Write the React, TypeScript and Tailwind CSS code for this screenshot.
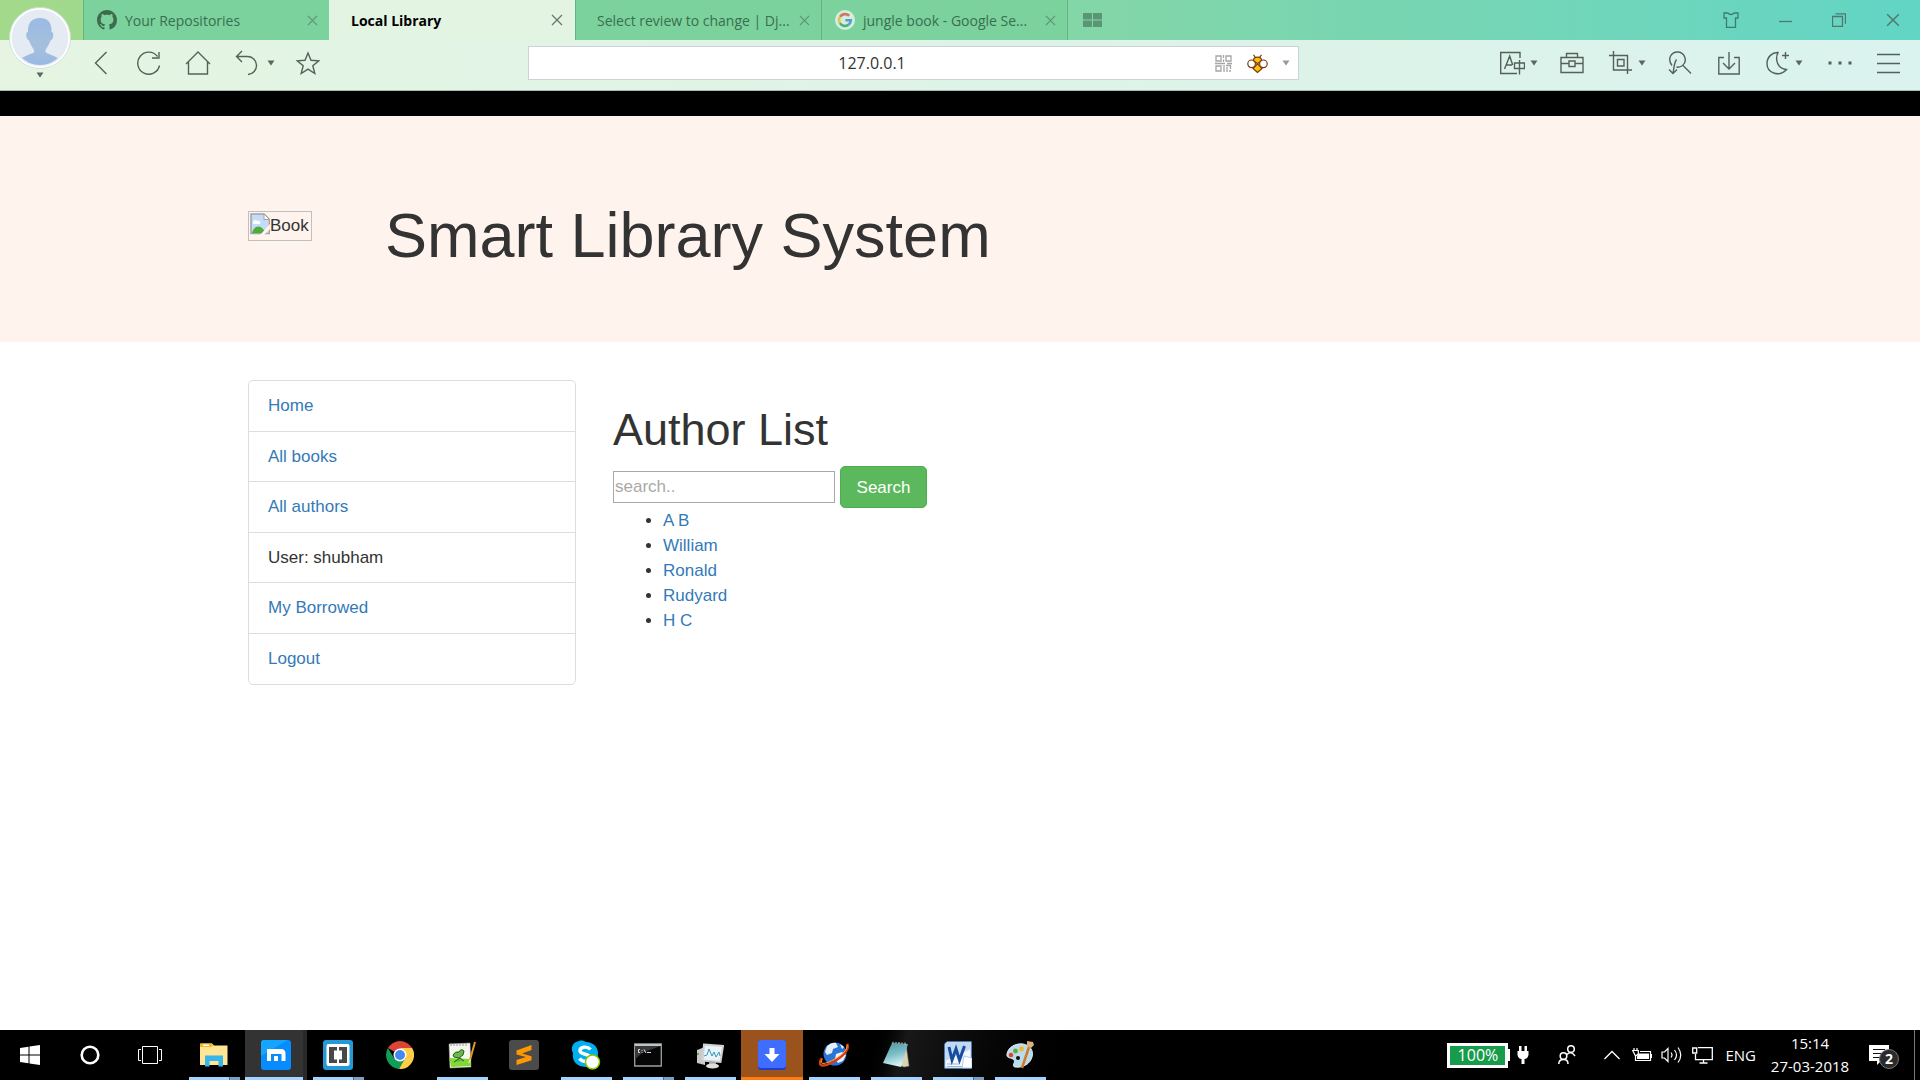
import type { ReactNode } from "react";

type IconProps = { w: number; h: number; children: ReactNode; className?: string; vb?: string };

function Icon({ w, h, children, className = "", vb }: IconProps) {
  return (
    <svg width={w} height={h} viewBox={vb ?? `0 0 ${w} ${h}`} fill="none" stroke="currentColor" className={`shrink-0 ${className}`} aria-hidden="true">
      {children}
    </svg>
  );
}

function Caret({ className = "text-[#5c6560]" }: { className?: string }) {
  return (
    <Icon w={8} h={6} className={className}>
      <path d="M0.5 0.5h7L4 5.5z" fill="currentColor" stroke="none" />
    </Icon>
  );
}

function Cross({ size }: { size: number }) {
  return (
    <Icon w={size} h={size} vb="0 0 12 12">
      <path d="M1 1l10 10M11 1L1 11" strokeWidth="1.3" />
    </Icon>
  );
}

/* ---------- browser tabs ---------- */

const GithubMark = (
  <Icon w={20} h={20} vb="0 0 16 16" className="text-[#3d6b4e]">
    <path
      stroke="none"
      fill="currentColor"
      d="M8 0C3.58 0 0 3.58 0 8c0 3.54 2.29 6.53 5.47 7.59.4.07.55-.17.55-.38 0-.19-.01-.82-.01-1.49-2.01.37-2.53-.49-2.69-.94-.09-.23-.48-.94-.82-1.13-.28-.15-.68-.52-.01-.53.63-.01 1.08.58 1.23.82.72 1.21 1.87.87 2.33.66.07-.52.28-.87.51-1.07-1.78-.2-3.64-.89-3.64-3.95 0-.87.31-1.59.82-2.15-.08-.2-.36-1.02.08-2.12 0 0 .67-.21 2.2.82.64-.18 1.32-.27 2-.27s1.36.09 2 .27c1.53-1.04 2.2-.82 2.2-.82.44 1.1.16 1.92.08 2.12.51.56.82 1.27.82 2.15 0 3.07-1.87 3.75-3.65 3.95.29.25.54.73.54 1.48 0 1.07-.01 1.93-.01 2.2 0 .21.15.46.55.38A8.01 8.01 0 0 0 16 8c0-4.42-3.58-8-8-8z"
    />
  </Icon>
);

const GoogleMark = (
  <Icon w={20} h={20}>
    <circle cx="10" cy="10" r="10" fill="#d3eedd" stroke="none" />
    <g strokeWidth="2.6">
      <path d="M14.2 5.8A6 6 0 0 0 5 6.8" stroke="#cf7765" />
      <path d="M5 6.8A6 6 0 0 0 4.9 13.1" stroke="#e3c25a" />
      <path d="M4.9 13.1A6 6 0 0 0 13.8 14.6" stroke="#4db273" />
      <path d="M13.8 14.6A6 6 0 0 0 15.8 10.2H10.4" stroke="#5a9bd0" />
    </g>
  </Icon>
);

const tabs = [
  { title: "Your Repositories", icon: GithubMark, active: false },
  { title: "Local Library", icon: null, active: true },
  { title: "Select review to change | Dj...", icon: null, active: false },
  { title: "jungle book - Google Se...", icon: GoogleMark, active: false },
];

function TabStrip() {
  return (
    <div className="flex h-10 bg-linear-to-r from-[#a3d98a] via-[#84d6a6] via-55% to-[#62d5c5] pl-[83px] text-[#3f7355]">
      {tabs.map((t) => (
        <div
          key={t.title}
          className={
            t.active
              ? "flex w-[246px] items-center bg-[#e4f4e2] pr-3 pl-[22px] text-[#6b7570]"
              : "flex w-[246px] items-center border-l border-[#62b583] bg-[#7bd29c] pr-[11px] pl-[13px] text-[#5c9575]"
          }
        >
          {t.icon && <span className="mr-2">{t.icon}</span>}
          <button
            className={
              t.active
                ? "flex-1 pt-px text-left text-sm font-bold whitespace-nowrap text-black"
                : `flex-1 pt-px text-left text-sm whitespace-nowrap text-[#3a6e50] ${t.icon ? "" : "pl-2"}`
            }
          >
            {t.title}
          </button>
          <button aria-label={`Close ${t.title}`}>
            <Cross size={t.active ? 12 : 11} />
          </button>
        </div>
      ))}
      <button aria-label="New tab" className="border-l border-[#62b583] px-[15px]">
        <Icon w={19} h={14} className="text-[#5a9574]">
          <path d="M0 0h9v6.500H0zM10 0h9v6.500h-9zM0 7.500h9V14H0zM10 7.500h9V14h-9z" fill="currentColor" stroke="none" />
        </Icon>
      </button>
      <div className="ml-auto flex text-[#52776f]">
        <button aria-label="Skins" className="flex w-[54px] items-center justify-center text-[#3a7d70]">
          <Icon w={16} h={16}>
            <path d="M5 1H1v5h2.500v9.500h9V6H15V1h-4c-1 2-5 2-6 0z" strokeWidth="1.300" />
          </Icon>
        </button>
        <button aria-label="Minimize" className="flex w-[54px] items-center justify-center">
          <Icon w={13} h={13}><path d="M0 7.500h13" strokeWidth="1.300" /></Icon>
        </button>
        <button aria-label="Restore" className="flex w-[54px] items-center justify-center">
          <Icon w={14} h={14}><path d="M.5 3.500h10v10H.5zM3.500 .8h10v10" strokeWidth="1.300" /></Icon>
        </button>
        <button aria-label="Close window" className="flex w-[54px] items-center justify-center">
          <Cross size={14} />
        </button>
      </div>
    </div>
  );
}

/* ---------- browser toolbar ---------- */

function Toolbar() {
  return (
    <div className="flex h-[51px] items-center border-b border-[#a3bdb4] bg-linear-to-r from-[#e5f5e2] via-[#def3e7] to-[#daf3ee] pb-1 pl-[77px] text-[#566059]">
      <button aria-label="Back" className="flex w-12 justify-center">
        <Icon w={14} h={24}><path d="M12.500 1L1.500 12l11 11" strokeWidth="1.400" /></Icon>
      </button>
      <button aria-label="Reload" className="flex w-12 justify-center">
        <Icon w={24} h={24}>
          <path d="M22.500 14.500A11 11 0 1 1 20.500 5.500M22 1v6h-7" strokeWidth="1.400" />
        </Icon>
      </button>
      <button aria-label="Home" className="flex w-[50px] justify-center">
        <Icon w={26} h={24}>
          <path d="M1 13L13 1l12 12M3.500 11v12h19V11" strokeWidth="1.400" />
        </Icon>
      </button>
      <button aria-label="Undo closed tab" className="flex w-[60px] items-center justify-center gap-2 pr-1 pl-2">
        <Icon w={24} h={26}>
          <path d="M7 1L1.500 6.500 7 12M1.500 6.500H12a9 9 0 0 1 1 18" strokeWidth="1.400" />
        </Icon>
        <Caret />
      </button>
      <button aria-label="Bookmark" className="flex w-[50px] justify-center">
        <Icon w={24} h={25}>
          <path d="M12 2l3 7.300 7.800.5-6 5 2 7.700L12 18.200 5.200 22.500l2-7.700-6-5L9 9.300z" strokeWidth="1.400" />
        </Icon>
      </button>

      <div className="mr-[189px] ml-[195px] flex h-[34px] flex-1 items-center border border-[#cdd1d8] bg-white pr-2">
        <input
          aria-label="Address"
          defaultValue="127.0.0.1"
          className="h-full min-w-0 flex-1 text-center text-base text-[#333] outline-none"
        />
        <button aria-label="QR code" className="text-[#a5a5a5]">
          <Icon w={17} h={17}>
            <path d="M1 1h5v5H1zM11 1h5v5h-5zM1 11h5v5H1zM8.500 0v3M8.500 4.500V7M0 8.500h10M12 8.500h5M9 10v7M11 10.500h5M12 12v5M15.500 11v3M14 16h2" strokeWidth="1.300" />
          </Icon>
        </button>
        <button aria-label="Site assistant" className="ml-[15px]">
          <Icon w={21} h={19}>
            <g stroke="#7a3a12" strokeWidth="1.200">
              <circle cx="4.600" cy="9.800" r="3.800" fill="#fff" />
              <circle cx="16.400" cy="9.800" r="3.800" fill="#fff" />
              <path d="M6.500 6.500C6.500 2 14.500 2 14.500 6.500L10.500 9.800z" fill="#ffc400" />
              <path d="M10.500 9.800l4.500 4.700-4.500 4-4.500-4z" fill="#ffc400" />
              <path d="M8.500 3.500L6.500 .8M12.500 3.500l2-2.700" />
            </g>
          </Icon>
        </button>
        <button aria-label="Address options" className="ml-[14px]">
          <Caret className="text-[#999]" />
        </button>
      </div>

      <div className="flex items-center">
        <button aria-label="Translate" className="flex w-[60px] items-center gap-[5px]">
          <Icon w={25} h={24} className="ml-3">
            <path d="M20 7V1.500H.7V22.500H17M4.500 18L9.700 5l3 9M6.500 14h5.500M14.500 12h10v5.500h-10zM19.500 9v14.500" strokeWidth="1.400" />
          </Icon>
          <Caret />
        </button>
        <button aria-label="Toolbox" className="flex w-12 justify-center">
          <Icon w={24} h={22}>
            <path d="M1 5.500h22v15H1zM6.500 5V1.500h11V5M1 11.500h8M15 11.500h8M9 9h6v5.500H9z" strokeWidth="1.400" />
          </Icon>
        </button>
        <button aria-label="Snap" className="flex w-[59px] items-center gap-[5px] pl-[13px]">
          <Icon w={24} h={24}>
            <path d="M4.500 0v19H23M0 4.500h18.500V23M8.500 8.500h6.500v6.500H8.500z" strokeWidth="1.400" />
          </Icon>
          <Caret />
        </button>
        <button aria-label="Resource sniffer" className="flex w-[49px] justify-center">
          <Icon w={24} h={24}>
            <path d="M4 14.500C-1 8 3 1 9.500 1c7 0 10.500 9 5 13.500-2 1.500-4 2-6 1.500M15 14.500l8 8M8.500 8.500C6 12 6 17 5 22.500M1 18.500l4 4 4-4" strokeWidth="1.400" />
          </Icon>
        </button>
        <button aria-label="Downloads" className="flex w-[49px] justify-center">
          <Icon w={22} h={24}>
            <path d="M6 6.500H.8V23h20.400V6.500H16M11 1v16.500M5 12l6 6 6-6" strokeWidth="1.400" />
          </Icon>
        </button>
        <button aria-label="Night mode" className="flex w-[60px] items-center gap-[5px] pl-[13px]">
          <Icon w={24} h={24}>
            <path d="M12 1.500C8.500 9 12 18 20.500 18.500 14 26 1 23 1 12.500 1 6 6.500 1 12 1.500zM19.500 1v7M16 4.500h7" strokeWidth="1.400" />
          </Icon>
          <Caret />
        </button>
        <button aria-label="More" className="flex w-[54px] justify-center">
          <Icon w={24} h={4}><path d="M0.500 .5h3v3h-3zM10.500 .5h3v3h-3zM20.500 .5h3v3h-3z" fill="currentColor" stroke="none" /></Icon>
        </button>
        <button aria-label="Menu" className="flex w-[53px] justify-center pr-[10px]">
          <Icon w={23} h={21}><path d="M0 1.500h23M0 10.500h23M0 19.500h23" strokeWidth="1.400" /></Icon>
        </button>
      </div>
    </div>
  );
}

function ProfileButton() {
  return (
    <button aria-label="Profile" className="absolute top-[7px] left-[9px] flex flex-col items-center gap-[3px]">
      <Icon w={62} h={62}>
        <defs>
          <linearGradient id="face" x1="0" y1="0" x2="0" y2="1">
            <stop offset="0" stopColor="#9bbbe4" />
            <stop offset="0.600" stopColor="#a5bfdc" />
            <stop offset="1" stopColor="#98b8e4" />
          </linearGradient>
          <clipPath id="disc"><circle cx="31" cy="31" r="27" /></clipPath>
        </defs>
        <circle cx="31" cy="31" r="29.500" fill="#e4ebf2" stroke="#fff" strokeWidth="2.500" />
        <circle cx="31" cy="31" r="30.500" stroke="#c2d3cf" strokeWidth="0.700" />
        <g clipPath="url(#disc)" stroke="none" fill="url(#face)">
          <path d="M31 11c9 0 12 6 11.500 14 3 0 2 8-1 8.500C40 38 37 42 36.500 43v2.500c4 2 13 4 15 9V60H10v-5.500c2-5 11-7 15-9V43c-.5-1-3.500-5-5-9.500-3-.5-4-8.500-1-8.500C18.500 17 22 11 31 11z" />
        </g>
      </Icon>
      <Caret />
    </button>
  );
}

/* ---------- page ---------- */

function Banner() {
  return (
    <header className="h-[226px] bg-[#fff3ed] px-6 pt-[77px]">
      <div className="mx-auto flex max-w-[1424px] items-start">
        <div role="img" aria-label="Book" className="mt-[18px] flex h-[30px] w-16 items-start border border-[#c0c0c0] pt-px pl-px">
          <Icon w={20} h={22}>
            <path d="M1 1h13l5.500 5.500V20.500H1z" fill="#c6dbf7" stroke="#a0a4a8" strokeWidth="1.500" />
            <path d="M3 10c0-3 3-4 4-2 3-1 4 1 3 3H3z" fill="#fff" stroke="none" />
            <path d="M2 20c2-8 9-9 13-1v1z" fill="#4caf35" stroke="none" />
            <path d="M20 11L10 22h4l6-6z" fill="#fff3ed" stroke="none" />
            <path d="M14 1v5.500h5.500z" fill="#fff" stroke="#a0a4a8" />
          </Icon>
          <span className="text-[17px] leading-[25px]">Book</span>
        </div>
        <h1 className="ml-[73px] text-[63px] leading-[85px]">Smart Library System</h1>
      </div>
    </header>
  );
}

const links = [
  { text: "Home", link: true },
  { text: "All books", link: true },
  { text: "All authors", link: true },
  { text: "User: shubham", link: false },
  { text: "My Borrowed", link: true },
  { text: "Logout", link: true },
];

const authors = ["A B", "William", "Ronald", "Rudyard", "H C"];

function Content() {
  return (
    <main className="flex-1 px-6 pt-[38px] text-[17px] leading-[25px]">
      <div className="mx-auto flex max-w-[1424px] items-start gap-[37px]">
        <ul className="grid min-h-[305px] w-[328px] auto-rows-fr divide-y divide-[#ddd] rounded-[5px] border border-[#ddd]">
          {links.map((l) => (
            <li key={l.text} className="flex items-center px-[19px]">
              {l.link ? <a href="#" className="text-[#337ab7]">{l.text}</a> : l.text}
            </li>
          ))}
        </ul>
        <section className="flex-1 pt-[25px]">
          <h2 className="text-[45px] leading-[50px]">Author List</h2>
          <form className="mt-[11px] flex items-center gap-[5px]" onSubmit={(e) => e.preventDefault()}>
            <input
              aria-label="Search authors"
              placeholder="search.."
              className="h-8 w-[222px] border border-[#a9a9a9] bg-white px-px pb-px placeholder:text-[#a9a9a9]"
            />
            <button className="h-[42px] w-[87px] rounded-[5px] border border-[#4cae4c] bg-[#5cb85c] text-white">Search</button>
          </form>
          <ul className="list-disc pl-[50px]">
            {authors.map((a) => (
              <li key={a}><a href="#" className="text-[#337ab7]">{a}</a></li>
            ))}
          </ul>
        </section>
      </div>
    </main>
  );
}

/* ---------- taskbar ---------- */

type App = { name: string; icon: ReactNode; state: "closed" | "open" | "stacked" | "active" | "alert" };

const apps: App[] = [
  {
    name: "File Explorer", state: "stacked",
    icon: (
      <Icon w={28} h={24}>
        <g stroke="none">
          <path d="M0 1.500Q0 .5 1 .5h11l2 2h13.500V22H0z" fill="#ffe594" />
          <path d="M0 1.500Q0 .5 1 .5h11l1 2-2 1.500H0z" fill="#f5b91f" />
          <path d="M3 1.500h6v1.500H3z" fill="#fff" />
          <path d="M5 23.500V12.500h18v11h-4.500V18h-9v5.500z" fill="#38b6e9" />
        </g>
      </Icon>
    ),
  },
  {
    name: "Maxthon", state: "active",
    icon: (
      <Icon w={30} h={30}>
        <rect width="30" height="30" rx="3" fill="#078cff" stroke="none" />
        <path d="M0 3a3 3 0 0 1 3-3h24L0 16z" fill="#13a5ff" stroke="none" />
        <path d="M6 9h14q4.500 0 4.500 4.500V21h-4v-7H10v7H6z" fill="#fff" stroke="none" />
        <path d="M13 16h4v5h-4z" fill="#fff" stroke="none" />
      </Icon>
    ),
  },
  {
    name: "Brackets", state: "stacked",
    icon: (
      <Icon w={30} h={30}>
        <g stroke="none">
          <rect width="30" height="30" rx="3" fill="#2399d6" />
          <rect x="3.500" y="4" width="23" height="22" rx="2" fill="#fff" />
          <path d="M6 7h8v3.500h-3v9h3V23H6zM24 7h-8v3.500h3v9h-3V23h8z" fill="#484848" />
        </g>
      </Icon>
    ),
  },
  {
    name: "Chrome", state: "closed",
    icon: (
      <Icon w={28} h={28}>
        <g stroke="none">
          <path d="M14 14L1.900 7A14 14 0 0 1 26.100 7H14z" fill="#db4437" />
          <path d="M1.900 7A14 14 0 0 0 13 28l7-10-12-1z" fill="#109d58" />
          <path d="M26.100 7A14 14 0 0 1 13 28l6.500-11L14 7z" fill="#ffcd46" />
          <circle cx="14" cy="14" r="6.500" fill="#fff" />
          <circle cx="14" cy="14" r="5" fill="#4688f1" />
        </g>
      </Icon>
    ),
  },
  {
    name: "Notepad++", state: "open",
    icon: (
      <Icon w={28} h={28}>
        <path d="M1 3l21-1 1 24-21 1z" fill="#f4f7ee" stroke="#aaa" strokeWidth="0.500" />
        <path d="M1.500 17l21 1 .5 7-20 1z" fill="#80d935" stroke="none" />
        <path d="M3 2v3M6 2v3M9 2v3M12 2v3M15 2v3M18 2v3" stroke="#999" />
        <path d="M5 14q2-4 6-3 2-4 5-1l-1 4-4 3-5-1zM6 21l6-4 4 3" fill="#6cb84a" stroke="#285b20" />
        <path d="M27 1l-5 18" stroke="#e39728" strokeWidth="2" />
        <path d="M22.300 18l-1.300 4" stroke="#f4ddb0" strokeWidth="1.500" />
      </Icon>
    ),
  },
  {
    name: "Sublime Text", state: "closed",
    icon: (
      <Icon w={30} h={30}>
        <rect width="30" height="30" rx="3" fill="#4b4b4b" stroke="none" />
        <path d="M7.500 10.500L22.500 5v5l-9.500 3.500 9.500 2.800v4L7.500 25v-5l9.500-3-9.500-2.500z" fill="#ff9800" stroke="none" />
      </Icon>
    ),
  },
  {
    name: "Skype", state: "open",
    icon: (
      <Icon w={30} h={30}>
        <path d="M8 1c3-1 5 0 7 1 7 0 12 5 12 11 0 8-4 14-12 14C3 27 1 18 2 13-1 8 2 2 8 1z" fill="#00aff0" stroke="none" />
        <path d="M19.500 9.500C16 5.500 8.500 7 9 11c.5 4 10.500 2.500 10.500 7 0 4.500-8 4.500-11 .5" stroke="#fff" strokeWidth="3.400" />
        <circle cx="21.500" cy="22" r="7" fill="#fff" stroke="#8cc400" strokeWidth="1.500" />
      </Icon>
    ),
  },
  {
    name: "Command Prompt", state: "stacked",
    icon: (
      <Icon w={28} h={24}>
        <path d="M.7 1h26.600v22H.7z" fill="#060606" stroke="#9aa1a5" strokeWidth="1.300" />
        <path d="M1 1h26v2H1z" fill="#bcc2c6" stroke="none" />
        <path d="M1.500 3h25L8 10l-6.500 6z" fill="#383838" stroke="none" />
        <path d="M6 6.500H4.500v3H6M8 7v.8M8 9v.8M10 6.500l2 3.500M13 9.500h4" stroke="#ddd" />
      </Icon>
    ),
  },
  {
    name: "Resource Monitor", state: "open",
    icon: (
      <Icon w={28} h={28}>
        <path d="M1 9l8-3v18L1 22z" fill="#c9c9c9" stroke="none" />
        <path d="M1 12h2v2H1z" fill="#53b636" stroke="none" />
        <path d="M8 3.500l19 1.500-2.500 16-18-1.500z" fill="#e9f4f8" stroke="#d0d0d0" strokeWidth="2" />
        <path d="M8 15l3-1 2-6 3 7 2-4 2 5 3-5 1 4" stroke="#3b94bd" />
        <path d="M13 20l7 1v4l-7-1z" fill="#a5a5a5" stroke="none" />
        <ellipse cx="16.500" cy="25" rx="6.500" ry="2.600" fill="#dedede" stroke="none" />
      </Icon>
    ),
  },
  {
    name: "Downloader", state: "alert",
    icon: (
      <Icon w={30} h={30}>
        <rect x="1" width="28" height="30" rx="3" fill="#1f3fd0" stroke="none" />
        <rect x="1" width="28" height="28" rx="3" fill="#3f6dff" stroke="none" />
        <path d="M12.500 8h5v6h5L15 22 7.500 14h5z" fill="#fff" stroke="none" />
      </Icon>
    ),
  },
  {
    name: "Planet Browser", state: "open",
    icon: (
      <Icon w={30} h={28}>
        <circle cx="16" cy="13" r="11.500" fill="#2974d6" stroke="none" />
        <path d="M8 5q5-4 9-3l2 4-5 2-1 4-5 2-2-3zM17 13l6-2 4 3-3 6-5 2-3-4zM21 3l4 3-2 2z" fill="#e5f1fa" stroke="none" />
        <path d="M3 17C-3 26 5 26 12 22 24 16 31 8 28 3" stroke="#dd3b18" strokeWidth="2.500" />
        <path d="M3 18.500c-3 6 4 4 10 1C24 14 29 8 28 4" stroke="#ffb52e" />
      </Icon>
    ),
  },
  {
    name: "Notepad", state: "open",
    icon: (
      <Icon w={28} h={28}>
        <defs>
          <linearGradient id="pad" x1="0" y1="0" x2="0.300" y2="1">
            <stop offset="0" stopColor="#4d929c" />
            <stop offset="0.550" stopColor="#7dbfc8" />
            <stop offset="1" stopColor="#d5f1f3" />
          </linearGradient>
        </defs>
        <path d="M24 4l3 21-5 1-5-2z" fill="#d9d2b4" stroke="#998e68" strokeWidth="0.500" />
        <path d="M10 2l16 1-7 23L1 22z" fill="url(#pad)" stroke="none" />
        <path d="M11 2.500V.8M14 2.500V1M17 3V1M20 3V1.500M23 3.500v-2" stroke="#ddd" />
      </Icon>
    ),
  },
  {
    name: "Word", state: "stacked",
    icon: (
      <Icon w={28} h={28}>
        <path d="M3 .7h24.300v26.600H.7V3z" fill="#f3f7fc" stroke="#5282c4" strokeWidth="1" />
        <path d="M1 3l2-2h24v7L1 20z" fill="#c3d9f2" stroke="none" />
        <path d="M3 23h12M3 25.500h15" stroke="#9db9dc" />
        <path d="M5 6l3 13 4-11 3.500 11L20.500 5" stroke="#174ea0" strokeWidth="3" />
        <path d="M20 15l8 2v10h-10z" fill="#fff" stroke="#9bb8de" strokeWidth="0.700" />
      </Icon>
    ),
  },
  {
    name: "Paint", state: "open",
    icon: (
      <Icon w={30} h={30}>
        <path d="M2 14C3 7 11 3 18 4c7 1 11 7 9 13-2 7-9 11-17 10-4-1 1-5-1-7-2-3-8-1-7-6z" fill="#b9dbea" stroke="#e0edf3" />
        <circle cx="6" cy="15" r="2.300" fill="#dd4233" stroke="none" />
        <circle cx="10.500" cy="11" r="2.400" fill="#62a83d" stroke="none" />
        <circle cx="16.500" cy="9" r="2.400" fill="#f1b828" stroke="none" />
        <circle cx="13" cy="18" r="2" fill="#111" stroke="none" />
        <path d="M24 7l-7 21" stroke="#ce7a2b" strokeWidth="2.500" />
        <path d="M22 1l6 1 1 3-3 3-4-2z" fill="#d9b27e" stroke="none" />
      </Icon>
    ),
  },
];

const cellStyle = {
  closed: "",
  open: "",
  stacked: "",
  active: "bg-[#333] border-r-4 border-[#292929]",
  alert: "bg-[#9b531d]",
};

function TaskButton({ app }: { app: App }) {
  return (
    <button aria-label={app.name} className={`flex w-[62px] flex-col items-center ${cellStyle[app.state]}`}>
      <span className={app.state === "active" ? "flex flex-1 items-center pt-[3px] pl-1" : "flex flex-1 items-center pt-[3px]"}>{app.icon}</span>
      {app.state === "closed" && <span className="h-[3px]" />}
      {app.state === "open" && <span className="h-[3px] w-[51px] bg-[#a6d2ff]" />}
      {app.state === "stacked" && (
        <span className="flex h-[3px] w-[51px] bg-[#a6d2ff]">
          <span className="ml-auto w-[11px] border-l border-[#4d6a85] bg-[#7d9fc2]" />
        </span>
      )}
      {app.state === "active" && <span className="h-[3px] w-full bg-[#a6d2ff]" />}
      {app.state === "alert" && <span className="h-[3px] w-full bg-[#ff7b0f]" />}
    </button>
  );
}

function Taskbar() {
  return (
    <footer className="flex h-[50px] bg-linear-105 from-black from-45% via-[#181818] via-47% to-black to-58% text-white">
      <button aria-label="Start" className="flex w-[60px] items-center justify-center">
        <Icon w={20} h={20}>
          <path d="M0 3l8.500-1.300v7.800H0zM9.500 1.500L20 0v9.500H9.500zM0 10.500h8.500v7.800L0 17zM9.500 10.500H20V20L9.500 18.500z" fill="#fff" stroke="none" />
        </Icon>
      </button>
      <button aria-label="Cortana" className="flex w-[60px] items-center justify-center">
        <Icon w={20} h={20}><circle cx="10" cy="10" r="8.300" strokeWidth="2.600" /></Icon>
      </button>
      <button aria-label="Task view" className="mr-[3px] flex w-[60px] items-center justify-center">
        <Icon w={24} h={18}><path d="M4.500 .5h15v17h-15zM3 3.500H.5v11H3M21 3.500h2.500v11H21" /></Icon>
      </button>
      {apps.map((a) => <TaskButton key={a.name} app={a} />)}

      <div className="ml-auto flex items-center">
        <div className="flex h-[25px] w-[61px] items-center justify-center border-[3px] border-white bg-[#169c4a] text-base">100%</div>
        <span className="h-3 w-[2px] bg-white" />
        <Icon w={12} h={18} className="ml-[7px]">
          <path d="M2 0h2.500v5h3V0H10v5h1.500v4q-1 4-4 4v5h-3v-5q-3 0-4-4V5H2z" fill="#fff" stroke="none" />
        </Icon>
        <Icon w={18} h={20} className="ml-[29px]">
          <circle cx="13" cy="4" r="3.300" strokeWidth="1.500" />
          <circle cx="5.500" cy="11" r="3.300" strokeWidth="1.500" />
          <path d="M.8 19q0-4.500 4.700-4.500T10 19M9 9.500q4-4 8 1.500" strokeWidth="1.500" />
        </Icon>
        <Icon w={16} h={10} className="ml-7"><path d="M.5 9L8 1.500 15.500 9" strokeWidth="1.300" /></Icon>
        <Icon w={20} h={14} className="ml-3">
          <path d="M2 0v2M5 0v2M.7 2.500h5.600V6L3.500 8zM3.500 8v4.500H18.500v-9H8M19.500 6v4" strokeWidth="1.200" />
          <path d="M6 5.500h11v5.500H5V8.500z" fill="#fff" stroke="none" />
        </Icon>
        <Icon w={21} h={18} className="ml-[9px]">
          <path d="M1 6h2.500L7 2.500v13L3.500 12H1zM10 6.500q2 2.500 0 5M13.500 4q4 5 0 10M17 1.500q5.500 7.500 0 15" strokeWidth="1.200" />
        </Icon>
        <Icon w={21} h={17} className="ml-[10px]">
          <path d="M6 .7h14.300v12H3.500V7M.7 1h4v5h-4zM11.500 13v3M7.500 16h8" strokeWidth="1.300" />
        </Icon>
        <span className="ml-3 text-[15px]">ENG</span>
        <div className="ml-[14px] w-[80px] text-center text-[15px] leading-[23px]">
          <div>15:14</div>
          <div>27-03-2018</div>
        </div>
        <button aria-label="Notifications" className="relative ml-[19px] h-[30px] w-[30px]">
          <Icon w={20} h={20}>
            <path d="M0 0h20v16h-8l-4 4v-4H0z" fill="#fff" stroke="none" />
            <path d="M4 4.500h12M4 8.500h12M4 12.500h8" stroke="#111" />
          </Icon>
          <span className="absolute top-[9px] left-[10px] flex h-5 w-5 items-center justify-center rounded-full border border-[#777] bg-[#2b2b2b] text-sm font-bold">2</span>
        </button>
        <span className="mr-[5px] ml-[15px] h-[50px] w-px bg-[#777]" />
      </div>
    </footer>
  );
}

export default function App() {
  return (
    <div className="flex min-h-screen flex-col bg-white font-['Liberation_Sans',Arial,sans-serif] text-[#333]">
      <div className="relative font-['Open_Sans','Noto_Sans',sans-serif]">
        <TabStrip />
        <Toolbar />
        <ProfileButton />
      </div>
      <div className="h-[25px] bg-black" />
      <Banner />
      <Content />
      <div className="font-['Open_Sans','Noto_Sans',sans-serif]">
        <Taskbar />
      </div>
    </div>
  );
}
